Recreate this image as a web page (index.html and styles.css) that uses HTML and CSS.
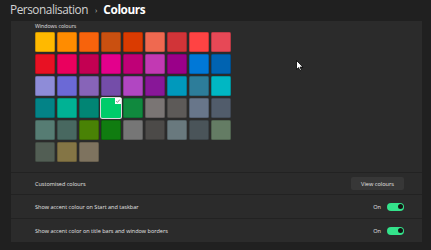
FILE: index.html
```html
<!DOCTYPE html>
<html>
<head>
<meta charset="utf-8">
<link rel="stylesheet" href="styles.css">
</head>
<body>
<div class="page">
  <header class="title">
    <span class="crumb">Personalisation</span>
    <span class="chev">›</span>
    <span class="current">Colours</span>
  </header>
  <div class="panel">
    <section class="colours">
      <div class="label">Windows colours</div>
      <div class="grid">
        <div class="sw" style="background:#FFB900"></div>
        <div class="sw" style="background:#FF8C00"></div>
        <div class="sw" style="background:#F7630C"></div>
        <div class="sw" style="background:#CA5010"></div>
        <div class="sw" style="background:#DA3B01"></div>
        <div class="sw" style="background:#EF6950"></div>
        <div class="sw" style="background:#D13438"></div>
        <div class="sw" style="background:#FF4343"></div>
        <div class="sw" style="background:#E74856"></div>

        <div class="sw" style="background:#E81123"></div>
        <div class="sw" style="background:#EA005E"></div>
        <div class="sw" style="background:#C30052"></div>
        <div class="sw" style="background:#E3008C"></div>
        <div class="sw" style="background:#BF0077"></div>
        <div class="sw" style="background:#C239B3"></div>
        <div class="sw" style="background:#9A0089"></div>
        <div class="sw" style="background:#0078D7"></div>
        <div class="sw" style="background:#0063B1"></div>

        <div class="sw" style="background:#8E8CD8"></div>
        <div class="sw" style="background:#6B69D6"></div>
        <div class="sw" style="background:#8764B8"></div>
        <div class="sw" style="background:#744DA9"></div>
        <div class="sw" style="background:#B146C2"></div>
        <div class="sw" style="background:#881798"></div>
        <div class="sw" style="background:#0099BC"></div>
        <div class="sw" style="background:#2D7D9A"></div>
        <div class="sw" style="background:#00B7C3"></div>

        <div class="sw" style="background:#038387"></div>
        <div class="sw" style="background:#00B294"></div>
        <div class="sw" style="background:#018574"></div>
        <div class="sw selected" style="background:#00CC6A">
          <span class="tick"><svg viewBox="0 0 6 6" width="6" height="6"><path d="M1.2 3.2 L2.4 4.4 L4.8 1.6" fill="none" stroke="#6a6a6a" stroke-width="0.8"/></svg></span>
        </div>
        <div class="sw" style="background:#10893E"></div>
        <div class="sw" style="background:#7A7574"></div>
        <div class="sw" style="background:#5D5A58"></div>
        <div class="sw" style="background:#68768A"></div>
        <div class="sw" style="background:#515C6B"></div>

        <div class="sw" style="background:#567C73"></div>
        <div class="sw" style="background:#486860"></div>
        <div class="sw" style="background:#498205"></div>
        <div class="sw" style="background:#107C10"></div>
        <div class="sw" style="background:#767676"></div>
        <div class="sw" style="background:#4C4A48"></div>
        <div class="sw" style="background:#69797E"></div>
        <div class="sw" style="background:#4A5459"></div>
        <div class="sw" style="background:#647C64"></div>

        <div class="sw" style="background:#525E54"></div>
        <div class="sw" style="background:#847545"></div>
        <div class="sw" style="background:#7E735F"></div>
      </div>
    </section>
    <div class="row row-first">
      <span class="row-text">Customised colours</span>
      <button class="btn">View colours</button>
    </div>
    <div class="row">
      <span class="row-text">Show accent colour on Start and taskbar</span>
      <div class="toggle-wrap"><span class="on">On</span><span class="toggle"><span class="knob"></span></span></div>
    </div>
    <div class="row">
      <span class="row-text">Show accent color on title bars and window borders</span>
      <div class="toggle-wrap"><span class="on">On</span><span class="toggle"><span class="knob"></span></span></div>
    </div>
  </div>
  <svg class="cursor" width="8" height="12" viewBox="0 0 8 12">
    <path d="M0.5 0.5 L0.5 9.5 L2.6 7.6 L4 10.8 L5.4 10.2 L4.1 7.1 L7 7.1 Z" fill="#ffffff" stroke="#000000" stroke-width="0.8" stroke-linejoin="round"/>
  </svg>
</div>
</body>
</html>
```
FILE: styles.css
```css
html, body {
  margin: 0;
  padding: 0;
  background: #202020;
}
body {
  font-family: "Open Sans", "Noto Sans", sans-serif;
  color: #e6e6e6;
  width: 431px;
  height: 250px;
  overflow: hidden;
}
.page {
  position: relative;
  width: 431px;
  height: 250px;
}
.title {
  height: 21px;
  display: flex;
  align-items: center;
  padding-left: 10px;
  font-size: 11.8px;
  line-height: 1;
  padding-bottom: 2px;
  box-sizing: border-box;
}
.crumb {
  color: #d2d2d2;
  font-weight: 500;
  letter-spacing: -0.45px;
}
.chev {
  color: #b8b8b8;
  font-size: 8px;
  margin: 0 6px 0 7px;
}
.current {
  color: #ffffff;
  font-weight: 700;
  letter-spacing: -0.4px;
}
.panel {
  margin-left: 11px;
  width: 411px;
  background: #2b2b2b;
}
.colours {
  padding: 2px 0 10px 24px;
  height: 151px;
  box-sizing: border-box;
}
.label {
  font-size: 5.2px;
  line-height: 7px;
  color: #e0e0e0;
  height: 9px;
}
.grid {
  display: grid;
  grid-template-columns: repeat(9, 20px);
  grid-auto-rows: 20px;
  gap: 2px;
}
.sw {
  border-radius: 1.5px;
  box-shadow: inset 0 0 0 0.6px rgba(0,0,0,0.35);
  position: relative;
}
.sw.selected {
  box-shadow: 0 0 0 1px #d9d9d9;
}
.tick {
  position: absolute;
  top: 0;
  right: 0;
  width: 6px;
  height: 6px;
  background: #ffffff;
  display: flex;
}
.row {
  display: flex;
  align-items: center;
  justify-content: space-between;
  border-top: 1px solid #222222;
  height: 23px;
  padding: 0 18px 0 24px;
  box-sizing: border-box;
}
.row-first {
  height: 22px;
}
.row + .row {
  height: 24px;
}
.row-text {
  font-size: 5.5px;
  color: #e4e4e4;
}
.btn {
  font-family: inherit;
  font-size: 5.6px;
  color: #e4e4e4;
  background: #373737;
  border: none;
  border-radius: 2px;
  width: 53px;
  height: 13px;
  padding: 0;
}
.toggle-wrap {
  display: flex;
  align-items: center;
  gap: 6px;
}
.on {
  font-size: 5.6px;
  color: #e4e4e4;
}
.toggle {
  width: 17px;
  height: 8px;
  border-radius: 4px;
  background: #34e38b;
  display: flex;
  align-items: center;
  justify-content: flex-end;
  padding-right: 1.5px;
  box-sizing: border-box;
}
.knob {
  width: 5px;
  height: 5px;
  border-radius: 50%;
  background: #141414;
}
.cursor {
  position: absolute;
  left: 296px;
  top: 60px;
}
```
